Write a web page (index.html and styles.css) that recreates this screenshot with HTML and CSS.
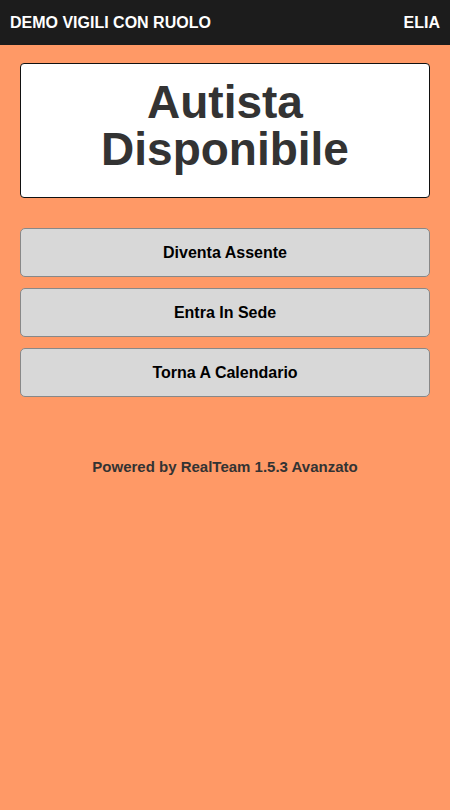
FILE: index.html
```html
<!DOCTYPE html>
<html>
<head>
<meta charset="utf-8">
<link rel="stylesheet" href="styles.css">
</head>
<body>
<header class="topbar">
  <span class="title">DEMO VIGILI CON RUOLO</span>
  <span class="user">ELIA</span>
</header>
<main class="content">
  <div class="status">Autista<br>Disponibile</div>
  <div class="actions">
    <button class="btn">Diventa Assente</button>
    <button class="btn">Entra In Sede</button>
    <button class="btn">Torna A Calendario</button>
  </div>
  <p class="footer">Powered by RealTeam 1.5.3 Avanzato</p>
</main>
</body>
</html>
```
FILE: styles.css
```css
html, body {
  margin: 0;
  padding: 0;
  height: 100%;
}
body {
  background: #ff9966;
  font-family: "Liberation Sans", Arial, sans-serif;
}
.topbar {
  height: 45px;
  background: #1c1c1c;
  color: #fff;
  display: flex;
  align-items: center;
  justify-content: space-between;
  padding: 0 10px;
  font-weight: bold;
  font-size: 16px;
}
.content {
  padding: 18px 20px;
}
.status {
  background: #fff;
  border: 1px solid #111;
  border-radius: 4px;
  text-align: center;
  font-weight: bold;
  font-size: 46px;
  line-height: 47px;
  color: #333;
  padding: 15px 0 24px;
}
.actions {
  margin-top: 30px;
  display: flex;
  flex-direction: column;
  gap: 11px;
}
.btn {
  height: 49px;
  background: #d8d8d8;
  border: 1px solid #888;
  border-radius: 5px;
  font-family: "Liberation Sans", Arial, sans-serif;
  font-weight: bold;
  font-size: 16px;
  color: #000;
  padding: 0;
}
.footer {
  margin: 61px 0 0;
  text-align: center;
  font-weight: bold;
  font-size: 15px;
  line-height: 18px;
  color: #333;
}
```
